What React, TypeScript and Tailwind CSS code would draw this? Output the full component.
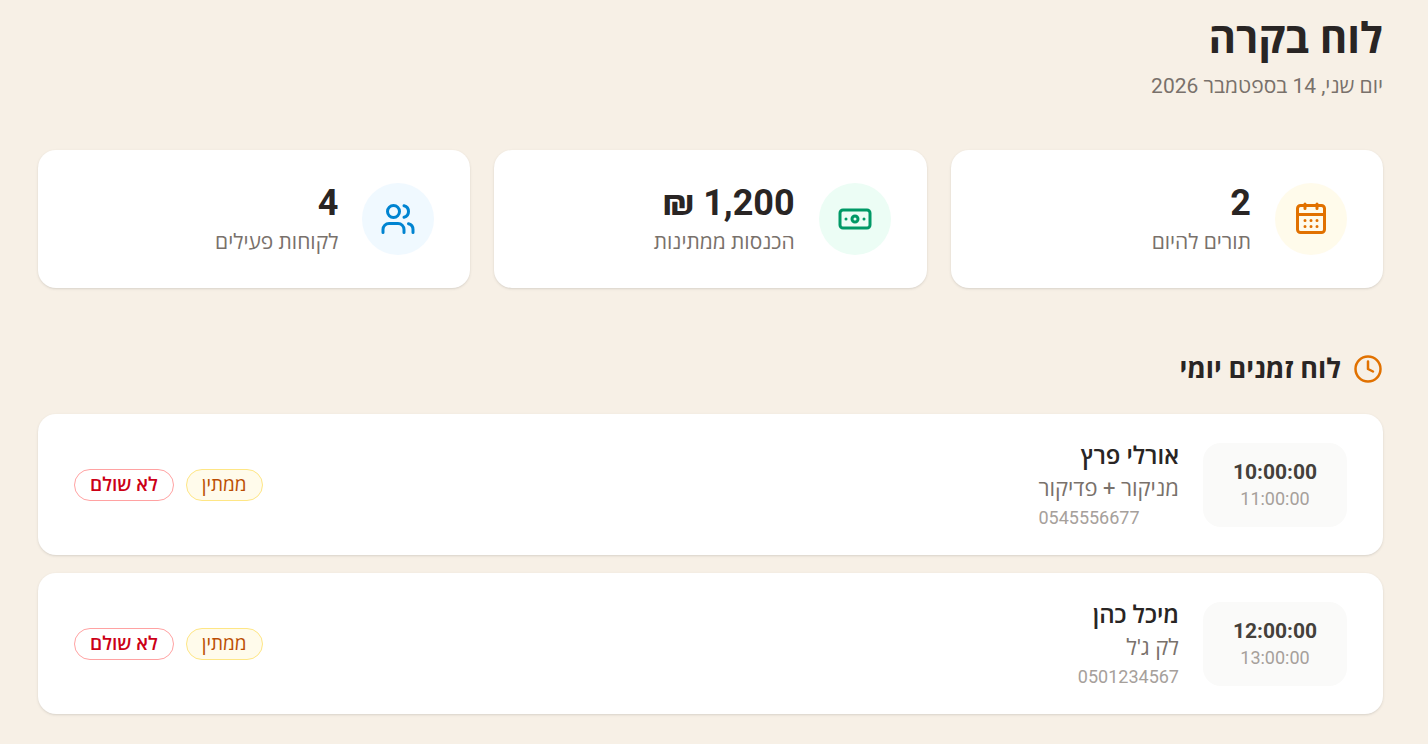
import type { ReactNode } from 'react'
import { Banknote, Users, Clock } from 'lucide-react'

interface StatCardProps {
    icon:   ReactNode
    tint:   string
    value:  string
    label:  string
}

interface Appointment {
    id:      number
    start:   string
    end:     string
    client:  string
    service: string
    phone:   string
}

const APPOINTMENTS: Appointment[] = [
    { id: 1, start: '10:00:00', end: '11:00:00', client: 'אורלי פרץ', service: 'מניקור + פדיקור', phone: '0545556677' },
    { id: 2, start: '12:00:00', end: '13:00:00', client: 'מיכל כהן', service: "לק ג'ל", phone: '0501234567' },
]

// calendar with short rings and two rows of days
function CalendarIcon({ className }: { className?: string }) {
    return (
        <svg
            width={36}
            height={36}
            viewBox="0 0 24 24"
            fill="none"
            stroke="currentColor"
            strokeWidth={2}
            strokeLinecap="round"
            strokeLinejoin="round"
            className={className}
            aria-hidden="true"
        >
            <rect x="3" y="3" width="18" height="18" rx="2" />
            <path d="M8 2v3M16 2v3M3 9h18" />
            <path d="M8 13h.01M12 13h.01M16 13h.01M8 17h.01M12 17h.01M16 17h.01" />
        </svg>
    )
}

function StatCard({ icon, tint, value, label }: StatCardProps) {
    return (
        <div className="flex items-center gap-6 rounded-[18px] bg-white px-9 py-[29px] shadow-sm">
            <div className={`flex size-[72px] shrink-0 items-center justify-center rounded-full ${tint}`}>
                {icon}
            </div>
            <div className="pt-[2px]">
                <p className="text-[36px] leading-[45px] font-bold text-stone-800">{value}</p>
                <p className="text-[21px] leading-[33px] text-stone-500">{label}</p>
            </div>
        </div>
    )
}

function AppointmentRow({ appointment }: { appointment: Appointment }) {
    return (
        <li className="flex items-center justify-between rounded-[18px] bg-white px-9 py-6 shadow-sm">
            <div className="flex items-center gap-6">
                {/* Time slot */}
                <div className="w-36 rounded-[18px] bg-stone-50 pt-[14px] pb-4 text-center">
                    <p className="text-[21px] leading-[30px] font-bold text-stone-700">{appointment.start}</p>
                    <p className="text-[18px] leading-6 text-stone-400">{appointment.end}</p>
                </div>

                {/* Client */}
                <div>
                    <h3 className="text-[24px] leading-9 font-semibold text-stone-800">{appointment.client}</h3>
                    <p className="text-[22px] leading-[30px] text-stone-500">{appointment.service}</p>
                    <p dir="ltr" className="text-left text-[18px] leading-[27px] text-stone-400">{appointment.phone}</p>
                </div>
            </div>

            {/* Status */}
            <div className="flex items-center gap-3">
                <span className="rounded-full border border-amber-200 bg-amber-50 px-[15px] py-[3px] text-[19px] leading-6 font-medium text-amber-700">
                    ממתין
                </span>
                <span className="rounded-full border border-red-300 px-[15px] py-[3px] text-[19px] leading-6 font-semibold text-[#cc0016]">
                    לא שולם
                </span>
            </div>
        </li>
    )
}

export default function App() {
    return (
        <main
            dir="rtl"
            className="min-h-screen bg-[#f7f0e6] pt-3 pr-[45px] pb-[30px] pl-[38px] font-[Roboto,'Open_Sans',sans-serif]"
        >
            <header className="mb-12">
                <h1 className="text-[42px] leading-[54px] font-bold text-stone-800">לוח בקרה</h1>
                <p className="mt-1 text-[21px] leading-8 text-stone-500">יום שני, 14 בספטמבר 2026</p>
            </header>

            <section className="mb-[60px] grid grid-cols-3 gap-6">
                <StatCard
                    icon={<CalendarIcon className="text-amber-600" />}
                    tint="bg-amber-50"
                    value="2"
                    label="תורים להיום"
                />
                <StatCard
                    icon={<Banknote size={36} className="text-emerald-600" />}
                    tint="bg-emerald-50"
                    value="1,200 ₪"
                    label="הכנסות ממתינות"
                />
                <StatCard
                    icon={<Users size={36} className="text-sky-600" />}
                    tint="bg-sky-50"
                    value="4"
                    label="לקוחות פעילים"
                />
            </section>

            <section>
                <h2 className="mb-6 flex items-center gap-3 text-[27px] leading-[42px] font-bold text-stone-800">
                    <Clock size={30} className="text-amber-600" />
                    לוח זמנים יומי
                </h2>
                <ul className="flex flex-col gap-[18px]">
                    {APPOINTMENTS.map((appointment) => (
                        <AppointmentRow key={appointment.id} appointment={appointment} />
                    ))}
                </ul>
            </section>
        </main>
    )
}
